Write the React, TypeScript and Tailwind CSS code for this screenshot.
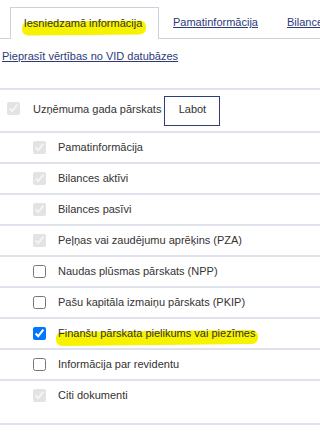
import React from "react";

const Hl = ({ children }: { children: React.ReactNode }) => (
  <span className="relative isolate inline-block whitespace-nowrap">
    <span className="absolute -left-[2px] -right-[3px] top-[35%] -bottom-[3px] -z-10 rounded-[6px] bg-[#f7f200] -rotate-[0.6deg]" />
    {children}
  </span>
);

const Row = ({
  label,
  checked,
  disabled,
  hl,
  tall,
}: {
  label: string;
  checked: boolean;
  disabled: boolean;
  hl?: boolean;
  tall?: boolean;
}) => (
  <div className={`flex items-start border-b-2 border-[#dfe2ea] pl-[33px] ${tall ? "h-[44px]" : "h-[31px]"}`}>
    <div className="flex h-[29px] items-center">
      <input
        type="checkbox"
        readOnly
        checked={checked}
        disabled={disabled}
        className={`m-0 h-[13px] w-[13px] ${disabled ? "opacity-60" : ""}`}
      />
      <span className="ml-[12px] whitespace-nowrap text-[#333]">{hl ? <Hl>{label}</Hl> : label}</span>
    </div>
  </div>
);

export default function App() {
  return (
    <div
      className="h-[432px] w-[320px] overflow-hidden bg-white text-[11px] text-[#333]"
      style={{ fontFamily: '"Liberation Sans", Arial, sans-serif' }}
    >
      <div className="flex items-end pt-[7px]">
        <div className="h-[1px] w-[10px] shrink-0 bg-[#cdd1db]" />
        <div className="flex h-[32px] w-[149px] shrink-0 items-center justify-center border-x border-t border-[#cdd1db] pr-[3px]">
          <Hl>Iesniedzamā informācija</Hl>
        </div>
        <div className="flex h-[32px] min-w-0 flex-1 items-center gap-[29px] overflow-hidden whitespace-nowrap border-b border-[#cdd1db] pl-[14px]">
          <span className="text-[#2c3a78] underline">Pamatinformācija</span>
          <span className="text-[#2c3a78] underline">Bilances aktīvi</span>
        </div>
      </div>
      <div className="h-[49px] pl-[2px] pt-[9px]">
        <span className="text-[#2c3a78] underline">Pieprasīt vērtības no VID datubāzes</span>
      </div>
      <div className="border-t-2 border-[#dfe2ea]" />
      <div className="flex h-[43px] items-center border-b-2 border-[#dfe2ea] pl-[7px]">
        <input type="checkbox" readOnly checked disabled className="m-0 mb-[4px] h-[13px] w-[13px] opacity-60" />
        <span className="ml-[13px] mb-[2px] text-[#333]">Uzņēmuma gada pārskats</span>
        <button className="ml-[3px] h-[30px] w-[56px] border border-[#2d3e7a] bg-white pb-[3px] text-[#333]">
          Labot
        </button>
      </div>
      <Row label="Pamatinformācija" checked disabled />
      <Row label="Bilances aktīvi" checked disabled />
      <Row label="Bilances pasīvi" checked disabled />
      <Row label="Peļņas vai zaudējumu aprēķins (PZA)" checked disabled />
      <Row label="Naudas plūsmas pārskats (NPP)" checked={false} disabled={false} />
      <Row label="Pašu kapitāla izmaiņu pārskats (PKIP)" checked={false} disabled={false} />
      <Row label="Finanšu pārskata pielikums vai piezīmes" checked disabled={false} hl />
      <Row label="Informācija par revidentu" checked={false} disabled={false} />
      <Row label="Citi dokumenti" checked disabled tall />
    </div>
  );
}
